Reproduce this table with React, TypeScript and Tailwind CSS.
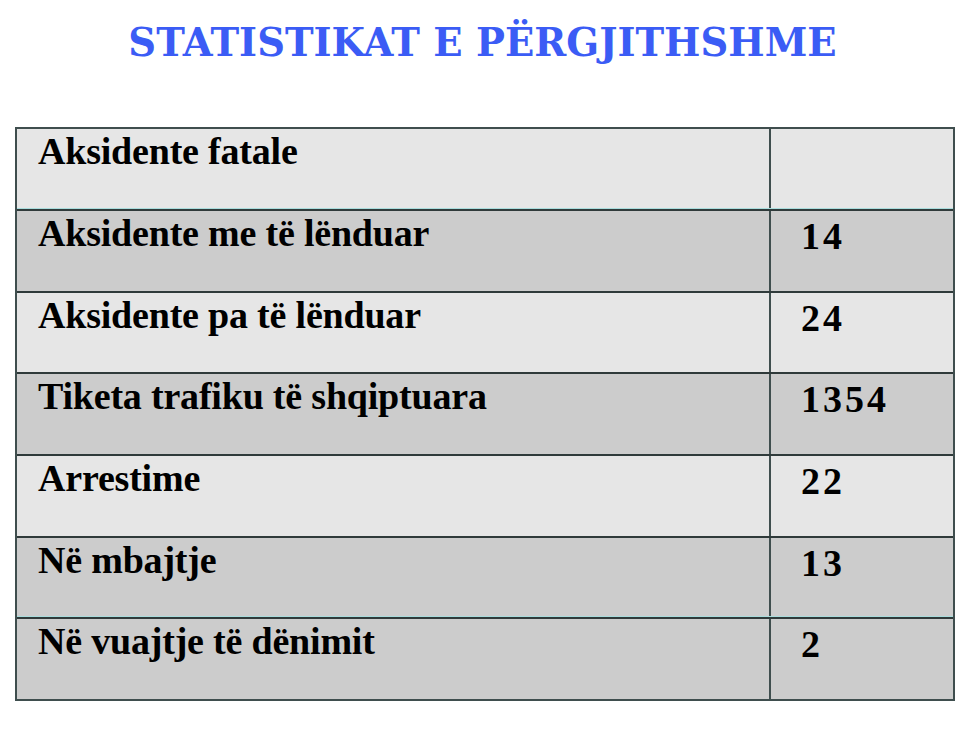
import React from "react";

const rows: [string, string, boolean][] = [
  ["Aksidente fatale", "", false],
  ["Aksidente me të lënduar", "14", true],
  ["Aksidente pa të lënduar", "24", false],
  ["Tiketa trafiku të shqiptuara", "1354", true],
  ["Arrestime", "22", false],
  ["Në mbajtje", "13", true],
  ["Në vuajtje të dënimit", "2", true],
];

export default function App() {
  return (
    <div
      className="w-[980px] h-[750px] bg-white"
      style={{ fontFamily: '"Liberation Serif", "DejaVu Serif", serif' }}
    >
      <div className="pt-[21px] flex justify-center">
        <h1
          className="text-[38.5px] leading-[44px] font-bold text-[#3b5cf5] tracking-[0px] ml-[-15px]"
          style={{ fontFamily: '"DejaVu Serif", "Liberation Serif", serif' }}
        >
          STATISTIKAT E PËRGJITHSHME
        </h1>
      </div>
      <div className="mt-[62px] ml-[15px] w-[940px] border-2 border-[#3f4e4e] flex flex-col">
        {rows.map(([label, value, dark], i) => (
          <div
            key={label}
            className={`flex ${i === 0 ? "h-[80px]" : "h-[81.7px] border-t-2 border-[#2f3a3a]"} ${
              i === 1 || i === 6 ? "shadow-[0_-1px_0_#a9dcdc]" : ""
            } ${dark ? "bg-[#cccccc]" : "bg-[#e6e6e6]"}`}
          >
            <div className="w-[754px] border-r-2 border-[#3f4e4e] pl-[21px] pt-0 text-[38px] leading-[44px] font-bold text-black tracking-[-0.2px]">
              {label}
            </div>
            <div className="flex-1 pl-[30px] pt-[3px] text-[38px] leading-[44px] font-bold text-black tracking-[3px]">
              {value}
            </div>
          </div>
        ))}
      </div>
    </div>
  );
}
